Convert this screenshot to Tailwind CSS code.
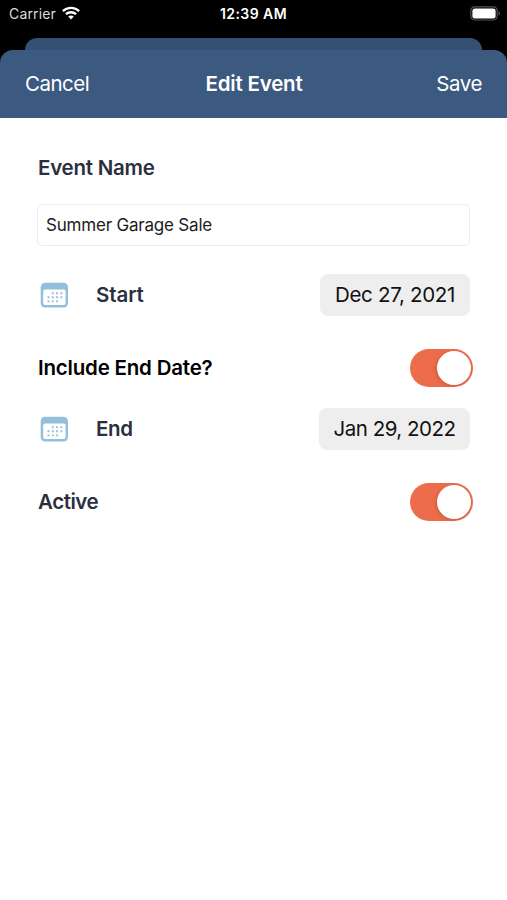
<!DOCTYPE html>
<html lang="en">
<head>
<meta charset="utf-8">
<meta name="viewport" content="width=device-width, initial-scale=1">
<title>Edit Event</title>
<script src="https://cdn.jsdelivr.net/npm/@tailwindcss/browser@4"></script>
</head>
<body class="bg-black">
<div class="flex h-[900px] w-[507px] flex-col overflow-hidden bg-black font-['Inter',sans-serif]">
  <!-- Status bar -->
  <div class="grid h-[38px] shrink-0 grid-cols-3 items-start text-white">
    <div class="flex h-7 items-center gap-[6px] pl-[9px]">
      <span class="text-[14px] leading-7 tracking-[0.15px] text-[#dcdcdc]">Carrier</span>
      <svg class="mb-[2px] h-[14px] w-[18px]" viewBox="0 0 18 14" fill="none" stroke="#fff" stroke-width="2.4"><path d="M.9 5.1C5.4.8 12.6.8 17.1 5.1M3.9 8.2c2.9-2.7 7.3-2.7 10.2 0"/><path d="M9 13.4 6.2 10.6c1.6-1.4 4-1.4 5.6 0Z" fill="#fff" stroke="none"/></svg>
    </div>
    <div class="h-7 text-center text-[14px] leading-7 font-semibold tracking-[0.45px]">12:39 AM</div>
    <div class="flex h-[26px] items-center justify-end pr-[6px]">
      <svg class="h-[15px] w-[31px]" viewBox="0 0 31 15"><rect x=".8" y=".8" width="26.4" height="13.2" rx="4" fill="none" stroke="#555" stroke-width="1.2"/><rect x="2.4" y="2.4" width="23.2" height="10" rx="2.5" fill="#fff"/><path d="M28.6 5.2c1.6.6 1.6 3.8 0 4.4Z" fill="#666"/></svg>
    </div>
  </div>
  <!-- Sheet behind -->
  <div class="mx-[25px] h-3 shrink-0 rounded-t-[12px] bg-[#345174]"></div>
  <!-- Front sheet -->
  <div class="flex grow flex-col">
    <header class="grid h-[68px] shrink-0 grid-cols-3 items-center rounded-t-[13px] bg-[#3c5a80] px-[25px] pt-px text-[20.5px] text-white">
      <span class="tracking-[-0.5px]">Cancel</span>
      <span class="pl-px text-center font-semibold tracking-[-0.2px] whitespace-nowrap">Edit Event</span>
      <span class="text-right tracking-[-0.4px]">Save</span>
    </header>
    <main class="flex grow flex-col bg-white px-[37px] pt-[35px] text-[20.5px] text-[#2b2f3f]">
      <label class="h-[30px] pl-px leading-[30px] font-semibold tracking-[-0.25px]">Event Name</label>
      <div class="mt-[21px] flex h-[42px] items-center rounded-[5px] border border-[#ebebeb] px-2 pt-px text-[17px] tracking-[-0.2px] text-[#1c1c1c]">Summer Garage Sale</div>
      <div class="mt-7 flex h-[42px] items-center">
        <svg class="ml-[3px] h-[26px] w-[29px]" viewBox="0 0 29 26"><rect x=".7" y=".7" width="27.3" height="24.8" rx="4.5" fill="#93bfda"/><rect x="3.2" y="7.5" width="22.4" height="15.4" rx="2" fill="#fff"/><path d="M11.8 11.2h11M7.5 15.3h15M7.5 19.4h11" stroke="#93bfda" stroke-width="1.9" stroke-dasharray="1.9 2.4"/></svg>
        <span class="ml-[27px] pt-px font-semibold tracking-[-0.1px]">Start</span>
        <div class="ml-auto flex h-[42px] w-[150px] items-center justify-center rounded-[8px] bg-[#eeeeee] pt-px font-normal tracking-[-0.3px] text-[#111]">Dec 27, 2021</div>
      </div>
      <div class="mt-[33px] -mr-[3px] flex h-[38px] items-center justify-between">
        <span class="pt-px pl-px font-semibold tracking-[-0.2px] text-black">Include End Date?</span>
        <div class="flex h-[38px] w-[63px] items-center justify-end rounded-full bg-[#ed6c4b] pr-[2px]"><div class="size-[34px] rounded-full bg-white shadow-[-1px_1px_4px_rgba(0,0,0,0.14)]"></div></div>
      </div>
      <div class="mt-[21px] flex h-[42px] items-center">
        <svg class="ml-[3px] h-[26px] w-[29px]" viewBox="0 0 29 26"><rect x=".7" y=".7" width="27.3" height="24.8" rx="4.5" fill="#93bfda"/><rect x="3.2" y="7.5" width="22.4" height="15.4" rx="2" fill="#fff"/><path d="M11.8 11.2h11M7.5 15.3h15M7.5 19.4h11" stroke="#93bfda" stroke-width="1.9" stroke-dasharray="1.9 2.4"/></svg>
        <span class="ml-[27px] pt-px font-semibold tracking-[-0.3px]">End</span>
        <div class="ml-auto flex h-[42px] w-[151px] items-center justify-center rounded-[8px] bg-[#eeeeee] pt-px font-normal tracking-[-0.5px] text-[#111]">Jan 29, 2022</div>
      </div>
      <div class="mt-[33px] -mr-[3px] flex h-[38px] items-center justify-between">
        <span class="pt-px pl-px font-semibold tracking-[-0.45px]">Active</span>
        <div class="flex h-[38px] w-[63px] items-center justify-end rounded-full bg-[#ed6c4b] pr-[2px]"><div class="size-[34px] rounded-full bg-white shadow-[-1px_1px_4px_rgba(0,0,0,0.14)]"></div></div>
      </div>
    </main>
  </div>
</div>
</body>
</html>
